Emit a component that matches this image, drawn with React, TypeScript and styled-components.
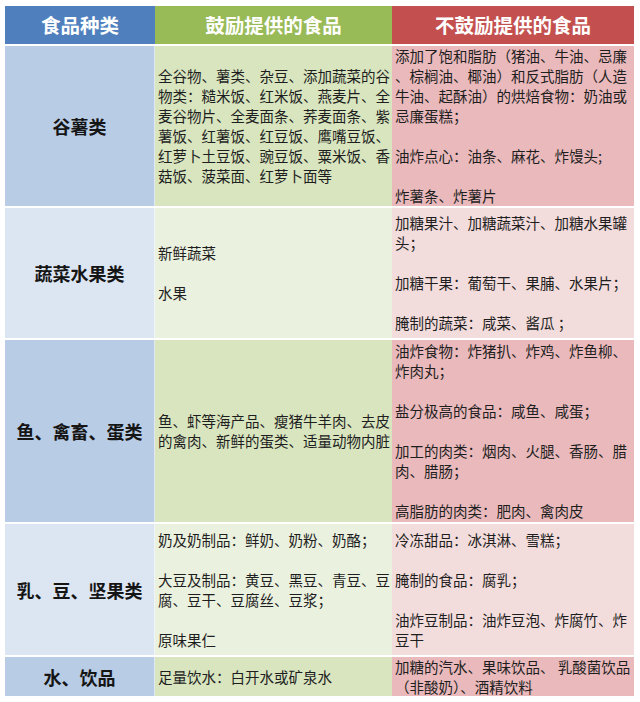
import React from 'react';
import styled, { createGlobalStyle } from 'styled-components';

type Tone = 'blue' | 'green' | 'red';
type Band = 'dark' | 'light';

const palette: Record<Tone, { head: string; dark: string; light: string }> = {
  blue: { head: '#4f80bd', dark: '#b9cce5', light: '#dce6f2' },
  green: { head: '#98ba57', dark: '#d8e5bf', light: '#ebf1df' },
  red: { head: '#c3504e', dark: '#e9b9bb', light: '#f3dcdc' },
};

const Global = createGlobalStyle`
  html, body { margin: 0; padding: 0; background: #ffffff; }
  body {
    font-family: "Noto Sans CJK SC", "Noto Sans", sans-serif;
    color: #1e1e1e;
  }
`;

const Table = styled.div<{ $rows: string }>`
  display: grid;
  grid-template-columns: 150px 237px 242px;
  grid-template-rows: ${(p) => p.$rows};
  row-gap: 2px;
  width: 629px;
  margin: 6px 0 0 5px;
`;

const HeadCell = styled.div<{ $tone: Tone }>`
  display: flex;
  align-items: center;
  justify-content: center;
  background: ${(p) => palette[p.$tone].head};
  color: #ffffff;
  font-size: 19.5px;
  font-weight: 700;
  line-height: 1;
  letter-spacing: 0;
`;

const LabelCell = styled.div<{ $band: Band }>`
  display: flex;
  align-items: center;
  justify-content: center;
  background: ${(p) => palette.blue[p.$band]};
  border-right: 1px solid rgba(255, 255, 255, 0.55);
  font-size: 18px;
  font-weight: 700;
  color: #151515;
  white-space: nowrap;
`;

const TextCell = styled.div<{ $tone: Tone; $band: Band }>`
  display: flex;
  flex-direction: column;
  justify-content: center;
  padding-left: 3px;
  background: ${(p) => palette[p.$tone][p.$band]};
  font-size: 14.5px;
  line-height: 20px;
  color: #1e1e1e;
  overflow: hidden;
`;

const Para = styled.div`
  white-space: nowrap;
  & + & {
    margin-top: 20px;
  }
`;

type Row = {
  label: string;
  band: Band;
  good: string[][];
  bad: string[][];
};

const rows: Row[] = [
  {
    label: '谷薯类',
    band: 'dark',
    good: [
      [
        '全谷物、薯类、杂豆、添加蔬菜的谷',
        '物类：糙米饭、红米饭、燕麦片、全',
        '麦谷物片、全麦面条、荞麦面条、紫',
        '薯饭、红薯饭、红豆饭、鹰嘴豆饭、',
        '红萝卜土豆饭、豌豆饭、粟米饭、香',
        '菇饭、菠菜面、红萝卜面等',
      ],
    ],
    bad: [
      [
        '添加了饱和脂肪（猪油、牛油、忌廉',
        '、棕榈油、椰油）和反式脂肪（人造',
        '牛油、起酥油）的烘焙食物：奶油或',
        '忌廉蛋糕；',
      ],
      ['油炸点心：油条、麻花、炸馒头;'],
      ['炸薯条、炸薯片'],
    ],
  },
  {
    label: '蔬菜水果类',
    band: 'light',
    good: [['新鲜蔬菜'], ['水果']],
    bad: [
      ['加糖果汁、加糖蔬菜汁、加糖水果罐', '头；'],
      ['加糖干果：葡萄干、果脯、水果片；'],
      ['腌制的蔬菜：咸菜、酱瓜 ；'],
    ],
  },
  {
    label: '鱼、禽畜、蛋类',
    band: 'dark',
    good: [['鱼、虾等海产品、瘦猪牛羊肉、去皮', '的禽肉、新鲜的蛋类、适量动物内脏']],
    bad: [
      ['油炸食物：炸猪扒、炸鸡、炸鱼柳、', '炸肉丸；'],
      ['盐分极高的食品：咸鱼、咸蛋；'],
      ['加工的肉类：烟肉、火腿、香肠、腊', '肉、腊肠；'],
      ['高脂肪的肉类：肥肉、禽肉皮'],
    ],
  },
  {
    label: '乳、豆、坚果类',
    band: 'light',
    good: [
      ['奶及奶制品：鲜奶、奶粉、奶酪；'],
      ['大豆及制品：黄豆、黑豆、青豆、豆', '腐、豆干、豆腐丝、豆浆；'],
      ['原味果仁'],
    ],
    bad: [
      ['冷冻甜品：冰淇淋、雪糕；'],
      ['腌制的食品：腐乳；'],
      ['油炸豆制品：油炸豆泡、炸腐竹、炸', '豆干'],
    ],
  },
  {
    label: '水、饮品',
    band: 'dark',
    good: [['足量饮水：白开水或矿泉水']],
    bad: [['加糖的汽水、果味饮品、 乳酸菌饮品', '（非酸奶）、酒精饮料']],
  },
];

const Paragraphs: React.FC<{ items: string[][] }> = ({ items }) => (
  <>
    {items.map((lines, i) => (
      <Para key={i}>
        {lines.map((line, j) => (
          <React.Fragment key={j}>
            {j > 0 && <br />}
            {line}
          </React.Fragment>
        ))}
      </Para>
    ))}
  </>
);

export default function App() {
  return (
    <>
      <Global />
      <Table $rows="38px 160px 130px 182px 131px 39px">
        <HeadCell $tone="blue">食品种类</HeadCell>
        <HeadCell $tone="green">鼓励提供的食品</HeadCell>
        <HeadCell $tone="red">不鼓励提供的食品</HeadCell>
        {rows.map((r) => (
          <React.Fragment key={r.label}>
            <LabelCell $band={r.band}>{r.label}</LabelCell>
            <TextCell $tone="green" $band={r.band}>
              <Paragraphs items={r.good} />
            </TextCell>
            <TextCell $tone="red" $band={r.band}>
              <Paragraphs items={r.bad} />
            </TextCell>
          </React.Fragment>
        ))}
      </Table>
    </>
  );
}
